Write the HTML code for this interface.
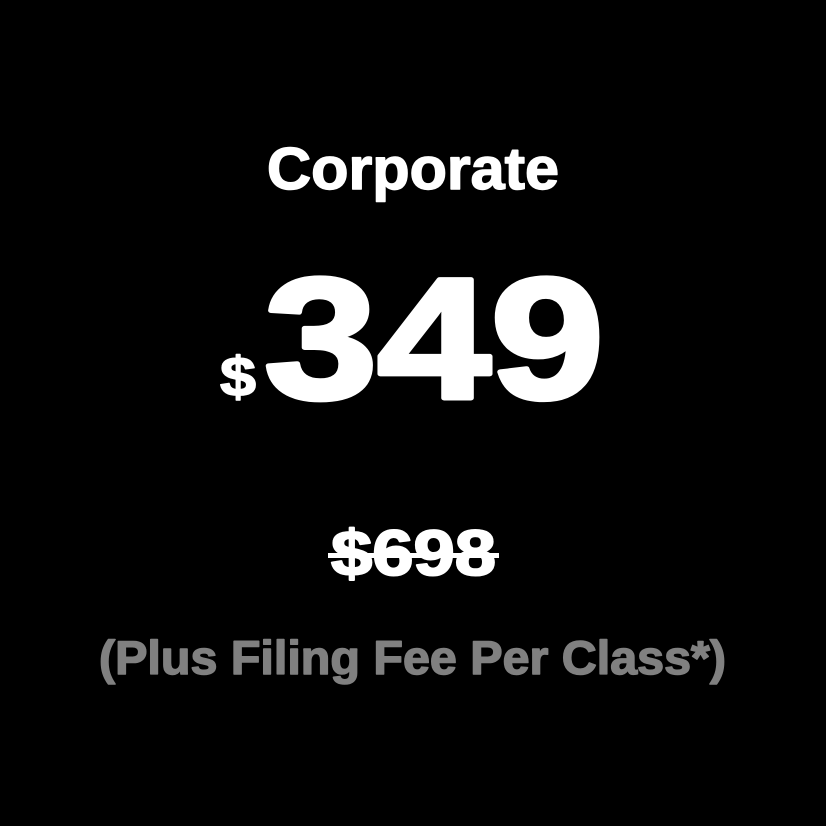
<!DOCTYPE html>
<html><head><style>html,body{margin:0;padding:0;background:#000;width:826px;height:826px;overflow:hidden}</style></head>
<body>
<svg width="826" height="826" viewBox="0 0 826 826" xmlns="http://www.w3.org/2000/svg" style="display:block">
<rect width="826" height="826" fill="#000"/>
<g font-family="Liberation Sans, sans-serif" font-weight="bold" stroke-linejoin="round">
<text x="267" y="189" font-size="59" fill="#fff" stroke="#fff" stroke-width="1.5" textLength="292" lengthAdjust="spacingAndGlyphs">Corporate</text>
<text x="220" y="396" font-size="56" fill="#fff" stroke="#fff" stroke-width="1.5" textLength="36" lengthAdjust="spacingAndGlyphs">$</text>
<text x="264" y="398" font-size="172" fill="#fff" stroke="#fff" stroke-width="5" textLength="340" lengthAdjust="spacingAndGlyphs">349</text>
<text x="331" y="575" font-size="64" fill="#fff" stroke="#fff" stroke-width="2" textLength="165" lengthAdjust="spacingAndGlyphs">$698</text>
<text x="99" y="674" font-size="47" fill="#808080" stroke="#808080" stroke-width="1.5" textLength="627" lengthAdjust="spacingAndGlyphs">(Plus Filing Fee Per Class*)</text>
</g>
<rect x="328" y="553" width="171" height="5" fill="#fff"/>
</svg>
</body></html>
